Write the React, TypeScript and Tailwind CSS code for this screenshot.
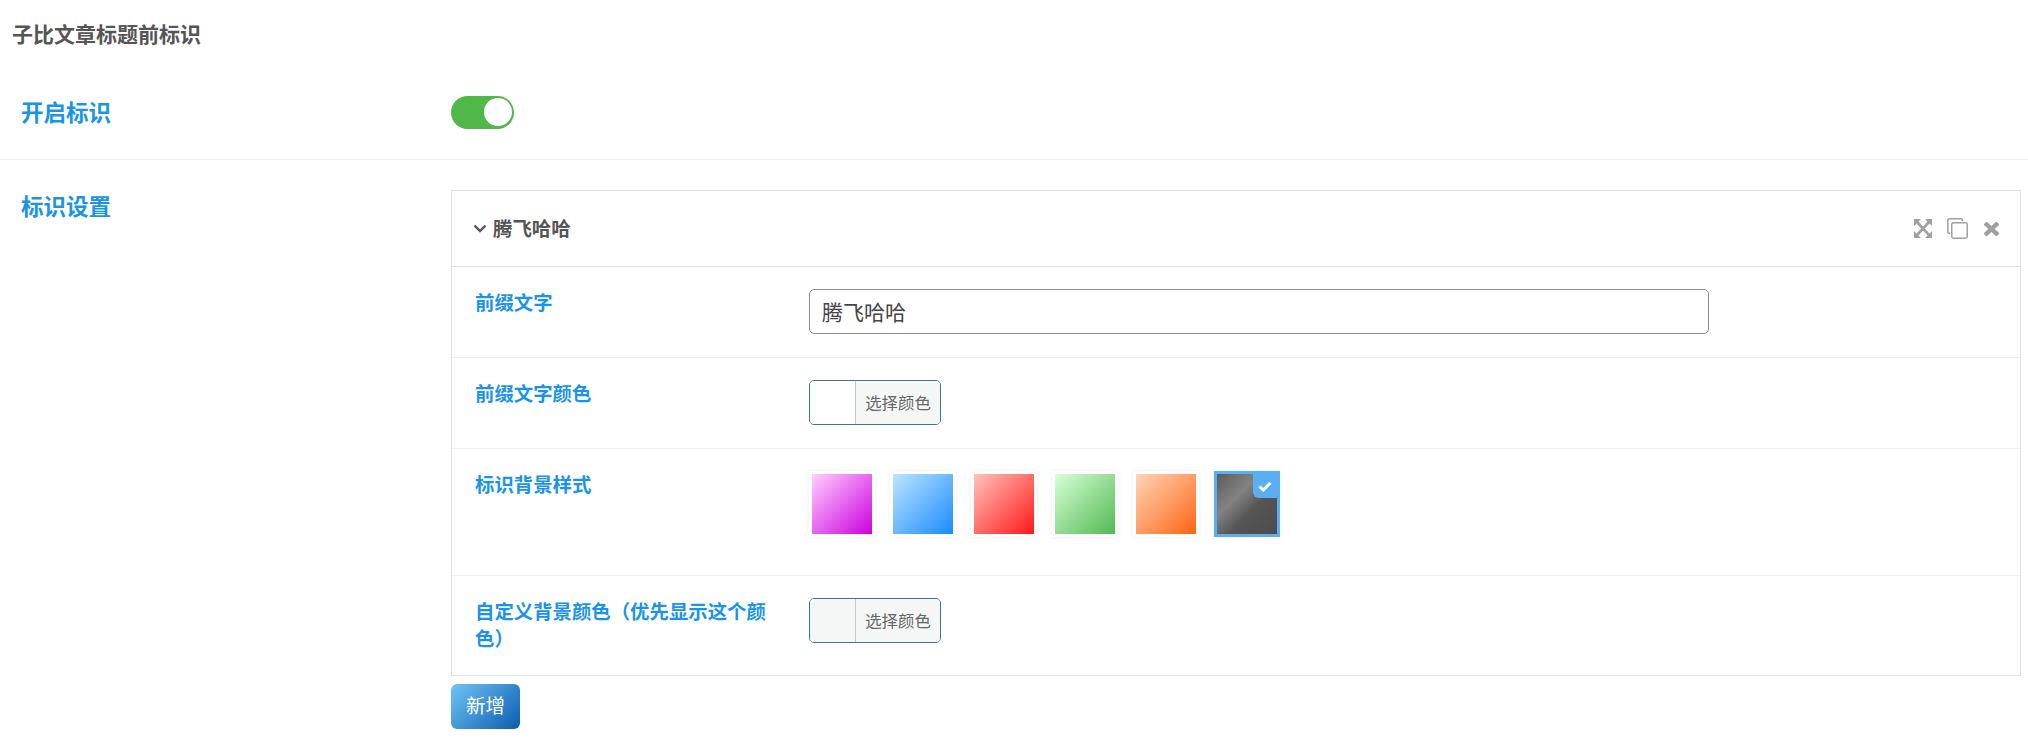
const cjk = 'font-["Noto_Sans_CJK_SC","Liberation_Sans",sans-serif]';

const swatches = [
  'bg-[linear-gradient(135deg,#ffd0ff,#cc00dd)]',
  'bg-[linear-gradient(135deg,#bce6ff,#1a8aff)]',
  'bg-[linear-gradient(135deg,#ffc4bc,#ff1818)]',
  'bg-[linear-gradient(135deg,#d8ffd8,#52ba52)]',
  'bg-[linear-gradient(135deg,#ffd6b8,#ff6414)]',
  'bg-[linear-gradient(135deg,#5c5c5c_0%,#828282_35%,#555555_60%,#4c4c4c_100%)]',
];

const ColorButton = ({ fill }: { fill: string }) => (
  <div className="flex h-[45px] w-[132px] overflow-hidden rounded-[5px] border border-[#3f739c]">
    <div className={`w-[46px] border-r border-[#c4c8c8] ${fill}`} />
    <div className="flex flex-1 items-center justify-center bg-[#f5f7f7] text-[16.4px] text-[#666666]">选择颜色</div>
  </div>
);

const Row = ({ label, height, children }: { label: string; height: string; children: React.ReactNode }) => (
  <div className={`flex border-b border-[#eeeeee] pl-[23px] pt-[21px] ${height}`}>
    <div className="w-[334px] pr-[34px] text-[19.4px] font-bold leading-[27px] text-[#1a94e8]">{label}</div>
    <div className="pt-[1px]">{children}</div>
  </div>
);

export default function App() {
  return (
    <div className={`h-[751px] w-[2028px] bg-white ${cjk}`}>
      <div className="flex h-[67px] items-center pl-[12px] text-[21px] font-bold text-[#555555]">子比文章标题前标识</div>

      <div className="flex h-[93px] items-center border-b border-[#eeeeee]">
        <div className="w-[451px] pl-[21px] pb-[2px] text-[22.5px] font-bold text-[#1a94e8]">开启标识</div>
        <div className="mb-[2px] flex h-[33px] w-[63px] items-center justify-end rounded-full bg-[#4fb848] pr-[2px]">
          <div className="h-[28px] w-[28px] rounded-full bg-white" />
        </div>
      </div>

      <div className="flex pt-[30px]">
        <div className="w-[451px] pl-[21px] text-[22.5px] font-bold leading-[31px] text-[#1a94e8]">标识设置</div>
        <div className="w-[1570px]">
          <div className="border border-[#e2e2e2]">
            <div className="flex h-[76px] items-center border-b border-[#e2e2e2] pl-[21px] pr-[21px] text-[#a0a0a0]">
              <svg viewBox="0 0 14 9" className="mr-[6px] h-[9px] w-[14px]" fill="none" stroke="#555555" strokeWidth="2.4">
                <path d="M1.500 1.500 7 7l5.500-5.500" />
              </svg>
              <span className="mb-[2px] flex-1 text-[19.4px] font-bold text-[#555555]">腾飞哈哈</span>
              <svg viewBox="0 0 18 19" className="h-[19px] w-[18px]" fill="#a0a0a0">
                <path d="M0 0h7L0 7zM18 0h-7l7 7zM0 19h7l-7-7zM18 19h-7l7-7z" />
                <path d="M3 3l12 13M15 3 3 16" stroke="#a0a0a0" strokeWidth="2.6" />
              </svg>
              <svg viewBox="0 0 21 21" className="ml-[15px] h-[21px] w-[21px]" fill="none" stroke="#a0a0a0" strokeWidth="1.5">
                <path d="M3 15.500H2.500a1.700 1.700 0 0 1-1.700-1.700V2.500A1.700 1.700 0 0 1 2.500 0.800h11.300A1.700 1.700 0 0 1 15.500 2.500V3" />
                <rect x="4.750" y="4.750" width="15.500" height="15.500" rx="1.700" />
              </svg>
              <svg viewBox="0 0 15 14" className="ml-[16px] h-[14px] w-[15px]" fill="none" stroke="#a0a0a0" strokeWidth="4.4">
                <path d="M1 1l13 12M14 1 1 13" />
              </svg>
            </div>

            <Row label="前缀文字" height="h-[91px]">
              <div className="flex h-[45px] w-[900px] items-center rounded-[5px] border border-[#8c8c8c] pl-[12px] text-[21px] text-[#444444]">腾飞哈哈</div>
            </Row>

            <Row label="前缀文字颜色" height="h-[91px]">
              <ColorButton fill="bg-white" />
            </Row>

            <Row label="标识背景样式" height="h-[127px]">
              <div className="flex gap-[15px]">
                {swatches.map((s, i) => (
                  <div
                    key={s}
                    className={`relative h-[66px] w-[66px] border-[3px] shadow-[0_0_4px_rgba(0,0,0,0.08)] ${i === 5 ? 'border-[#5aaef2]' : 'border-white'} ${s}`}
                  >
                    {i === 5 && (
                      <div className="absolute right-0 top-0 flex h-[24px] w-[24px] items-center justify-center rounded-bl-[6px] bg-[#5aaef2]">
                        <svg viewBox="0 0 14 11" className="h-[11px] w-[14px]" fill="none" stroke="white" strokeWidth="3">
                          <path d="M1.500 5.500 5.300 9 12.500 1.800" />
                        </svg>
                      </div>
                    )}
                  </div>
                ))}
              </div>
            </Row>

            <div className="flex h-[99px] pl-[23px] pt-[21px]">
              <div className="w-[334px] pr-[34px] text-[19.4px] font-bold leading-[27px] text-[#1a94e8]">自定义背景颜色（优先显示这个颜色）</div>
              <div className="pt-[1px]">
                <ColorButton fill="bg-[#f5f7f7]" />
              </div>
            </div>
          </div>

          <div className="mt-[8px] flex h-[45px] w-[69px] items-center justify-center rounded-[6px] bg-[linear-gradient(135deg,#70c4f7,#0a5cae)] pb-[3px] text-[19.5px] text-white">新增</div>
        </div>
      </div>
    </div>
  );
}
